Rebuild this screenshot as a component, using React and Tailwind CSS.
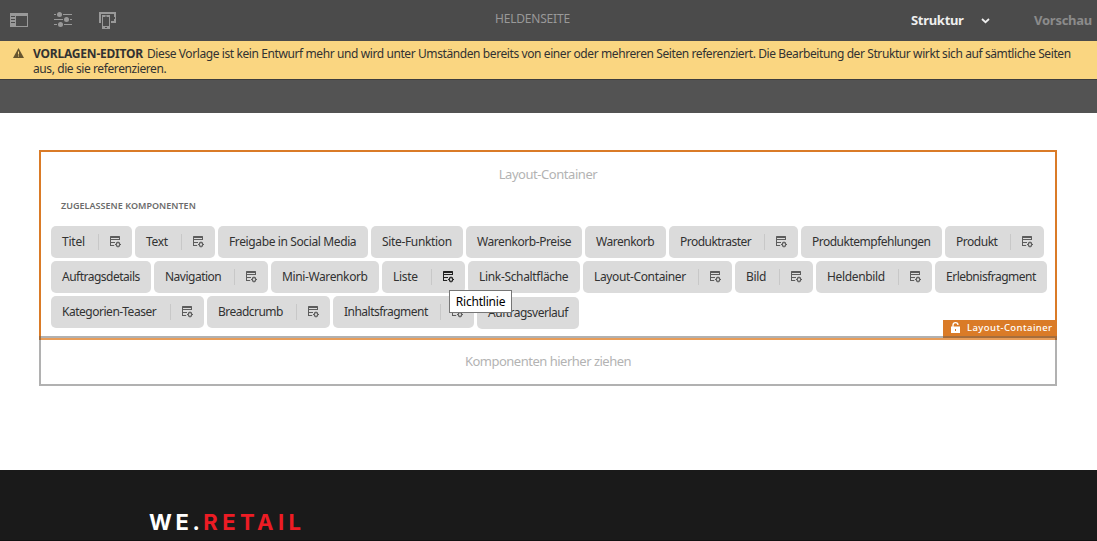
import { clsx } from "clsx";

const rows = [
  [
    { label: "Titel", width: "w-[81px] tracking-[-0.2px]", policy: true },
    { label: "Text", width: "w-20 tracking-[-0.3px]", policy: true },
    { label: "Freigabe in Social Media", width: "w-[150px] tracking-[-0.38px]" },
    { label: "Site-Funktion", width: "w-[92px] tracking-[-0.34px]" },
    { label: "Warenkorb-Preise", width: "w-[116px] tracking-[-0.42px]" },
    { label: "Warenkorb", width: "w-[81px] tracking-[-0.48px]" },
    { label: "Produktraster", width: "w-[129px] tracking-[-0.52px]", policy: true },
    { label: "Produktempfehlungen", width: "w-[141px] tracking-[-0.5px]" },
    { label: "Produkt", width: "w-[99px] tracking-[-0.48px]", policy: true },
  ],
  [
    { label: "Auftragsdetails", width: "w-[100px] tracking-[-0.5px]" },
    { label: "Navigation", width: "w-[114px] tracking-[-0.5px]", policy: true },
    { label: "Mini-Warenkorb", width: "w-[108px] tracking-[-0.38px]" },
    { label: "Liste", width: "w-[83px] tracking-[-0.3px]", policy: true, active: true },
    { label: "Link-Schaltfläche", width: "w-[112px] tracking-[-0.33px]" },
    { label: "Layout-Container", width: "w-[149px] tracking-[-0.36px]", policy: true },
    { label: "Bild", width: "w-[78px] tracking-[-0.3px]", policy: true },
    { label: "Heldenbild", width: "w-[116px] tracking-[-0.35px]", policy: true },
    { label: "Erlebnisfragment", width: "w-[112px] tracking-[-0.5px]" },
  ],
  [
    { label: "Kategorien-Teaser", width: "w-[153px] tracking-[-0.48px]", policy: true },
    { label: "Breadcrumb", width: "w-[123px] tracking-[-0.52px]", policy: true },
    { label: "Inhaltsfragment", width: "w-[141px] tracking-[-0.52px]", policy: true },
    { label: "Auftragsverlauf", width: "w-[102px] tracking-[-0.5px] mt-px" },
  ],
];

function PolicyIcon() {
  return (
    <svg width="12" height="12" viewBox="0 0 12 12" fill="currentColor">
      <path d="M.5 0h9q.5 0 .5.5V2H0V.5Q0 0 .5 0z" />
      <path d="M0 2h1v8H0zM9 2h1v2H9zM0 3h10v1H0zM0 6h5v1H0zM0 9h4.2v1H0z" />
      <circle cx="8" cy="8.5" r="1.8" fill="none" stroke="currentColor" strokeWidth="1.2" />
      <path d="M7.5 5.5h1v1.2h-1zM7.5 10.3h1v1.2h-1zM5 8h1.2v1H5zM9.8 8H11v1H9.8z" />
      <path d="M6 6.5l.8.7M10 6.5l-.8.7M6 10.5l.8-.7M10 10.5l-.8-.7" stroke="currentColor" strokeWidth=".8" />
    </svg>
  );
}

function Chip({ label, width, policy, active }) {
  return (
    <div className={clsx("flex h-8 shrink-0 items-center rounded-[5px] bg-[#dbdbdb] pl-[11px] text-[12px] whitespace-nowrap text-[#323232]", width)}>
      <span>{label}</span>
      {policy && (
        <span className={clsx("ml-auto flex h-4 items-center border-l border-[#c8c8c8] pr-2.5 pl-[11px]", active ? "text-[#222]" : "text-[#5c5c5c]")}>
          <PolicyIcon />
        </span>
      )}
    </div>
  );
}

function Toolbar() {
  return (
    <header className="flex h-[41px] items-center bg-[#4b4b4b] text-[#999]">
      <div className="flex w-[495px] items-center pl-2.5">
        <svg width="18" height="14" viewBox="0 0 18 14" className="-mt-px mr-[26px]">
          <path fill="currentColor" fillRule="evenodd" d="M0 0h18v14H0zM6 3v10h11V3z" />
          <path stroke="#4b4b4b" d="M1 3.5h4M1 6.5h4M1 9.5h4" />
        </svg>
        <svg width="18" height="16" viewBox="0 0 18 16" className="-mt-0.5 mr-[27px]">
          <path stroke="currentColor" d="M0 2.5h2M9 2.5h9M0 7.5h9M16 7.5h2M0 12.5h3M10 12.5h8" />
          <g fill="currentColor">
            <circle cx="5.5" cy="2.5" r="2.5" />
            <circle cx="12.5" cy="7.5" r="2.5" />
            <circle cx="6.5" cy="12.5" r="2.5" />
          </g>
        </svg>
        <svg width="18" height="17" viewBox="0 0 18 17" fill="currentColor">
          <path d="M0 0h17v11h-5V9h3V2H2v9H0z" />
          <path fillRule="evenodd" d="M3 3h8v14H3zM4 5v9h6V5zM6 3.7v.8h2v-.8zM6 15v1h2v-1z" />
          <path d="M15 5h1v2h-1z" fill="#4b4b4b" />
        </svg>
      </div>
      <span className="-mt-1 w-[416px] text-[12px] tracking-[-0.2px]">HELDENSEITE</span>
      <span className="w-[70px] text-[13px] font-bold tracking-[-0.3px] text-[#eee]">Struktur</span>
      <svg width="9" height="6" viewBox="0 0 9 6" className="mr-11">
        <path d="M1 1l3.5 3.2L8 1" fill="none" stroke="#eee" strokeWidth="1.8" />
      </svg>
      <span className="text-[13px] font-bold tracking-[-0.25px] text-[#8b8b8b]">Vorschau</span>
    </header>
  );
}

function Warning() {
  return (
    <div className="flex h-[39px] items-start border-b border-[#3d3d3d] bg-[#fad681] pl-[13px] text-[#323232]">
      <svg width="11" height="10" viewBox="0 0 11 10" className="mt-[7px] mr-[9px] shrink-0">
        <path d="M5.5 0L11 10H0z" fill="#66552f" />
        <path d="M5 3.5h1v3H5zM5 7.5h1v1H5z" fill="#fad681" />
      </svg>
      <p className="pt-[5px] text-[12px] leading-[15px] tracking-[-0.2px] whitespace-nowrap">
        <b className="mr-px tracking-[-0.2px]">VORLAGEN-EDITOR</b>{" "}
        <span className="tracking-[-0.405px]">
          Diese Vorlage ist kein Entwurf mehr und wird unter Umständen bereits von einer oder mehreren Seiten referenziert. Die Bearbeitung der Struktur wirkt sich auf sämtliche Seiten
          <br />
          aus, die sie referenzieren.
        </span>
      </p>
    </div>
  );
}

export default function App() {
  return (
    <div className="flex h-[541px] w-[1097px] flex-col overflow-hidden bg-white font-['Noto_Sans',sans-serif]">
      <Toolbar />
      <Warning />
      <div className="h-[33px] bg-[#535353]" />
      <main className="flex h-[357px] flex-col pt-[37px] pr-10 pl-[39px]">
        <section className="relative flex h-[186px] flex-col border-2 border-b-0 border-[#da7b27] px-2.5">
          <h2 className="mt-3 text-center text-[13px] leading-5 tracking-[-0.45px] text-[#b3b3b3]">Layout-Container</h2>
          <h3 className="mt-4 pl-2.5 text-[9px] leading-3 font-semibold tracking-[0.03px] text-[#6b6b6b]">ZUGELASSENE KOMPONENTEN</h3>
          <div className="mt-3.5 flex flex-col gap-[3px]">
            {rows.map((row, i) => (
              <div key={i} className="flex h-8 gap-[3px]">
                {row.map((item) => (
                  <Chip key={item.label} {...item} />
                ))}
              </div>
            ))}
          </div>
          <div className="absolute top-[138px] left-[408px] flex h-[23px] w-[63px] items-center justify-center border border-[#767676] bg-white text-[12px] tracking-[-0.2px] text-black">
            Richtlinie
          </div>
          <div className="absolute right-[-2px] bottom-0 flex h-4 w-[114px] items-center bg-[#da7b27] pl-2 text-[9.5px] font-medium tracking-[0.42px] whitespace-nowrap text-white">
            <svg width="9" height="11" viewBox="0 0 9 11" className="-mt-px mr-[7px]">
              <path d="M0 4.5h9V11H0z" fill="#fff" />
              <path d="M2 5V3Q2 .7 4.5.7T7 3" fill="none" stroke="#fff" strokeWidth="1.3" />
              <path d="M4 7h1v2H4z" fill="#da7b27" />
            </svg>
            Layout-Container
          </div>
        </section>
        <div className="flex h-1 flex-col">
          <div className="flex h-0.5 bg-[#b1b1b1]">
            <span className="w-0.5 bg-[#a56d3c]" />
            <span className="ml-auto w-[114px] bg-[#a56d3c]" />
          </div>
          <div className="flex h-0.5 justify-between bg-[#e89d59]">
            <span className="w-0.5 bg-[#a56d3c]" />
            <span className="w-0.5 bg-[#a56d3c]" />
          </div>
        </div>
        <section className="flex h-[46px] items-center justify-center border-2 border-t-0 border-[#b1b1b1] text-[13px] tracking-[-0.5px] text-[#b3b3b3]">
          Komponenten hierher ziehen
        </section>
      </main>
      <footer className="h-[71px] border-b border-[#111] bg-[#1a1a1a] pt-[38px] pl-[149px] font-['Inter',sans-serif] text-[22px] leading-7 font-bold text-white">
        <span className="tracking-[3.6px]">WE.</span>
        <span className="tracking-[4.4px] text-[#ed1c24]">RETAIL</span>
      </footer>
    </div>
  );
}
